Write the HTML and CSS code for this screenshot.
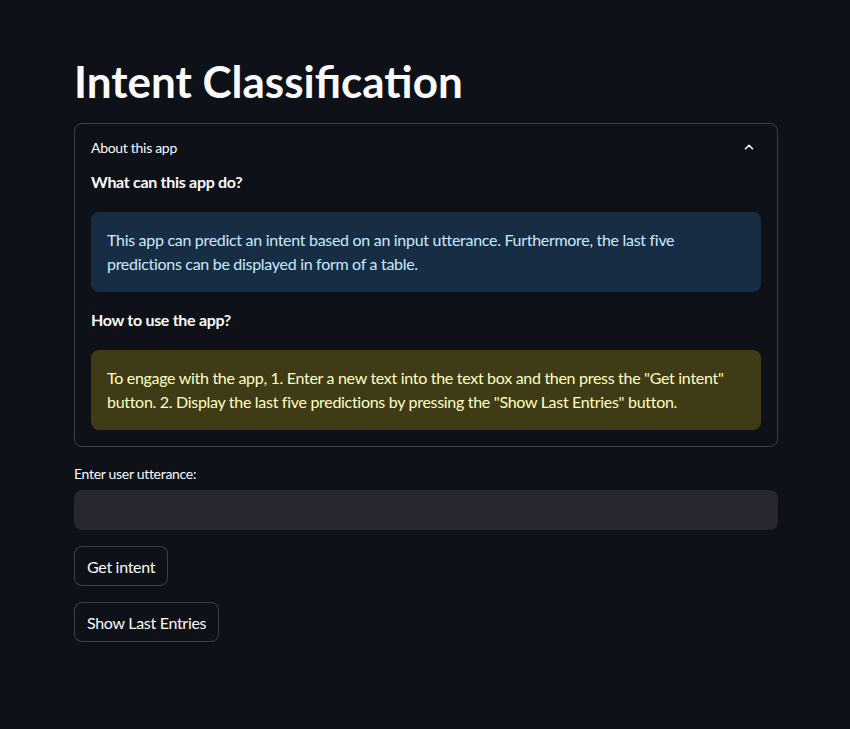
FILE: index.html
```html
<!DOCTYPE html>
<html>
<head>
<meta charset="utf-8">
<link rel="stylesheet" href="styles.css">
</head>
<body>
<main class="container">
  <h1 class="title">Intent Classification</h1>
  <section class="expander">
    <div class="exp-header">
      <span class="exp-label">About this app</span>
      <svg class="chevron" width="16" height="16" viewBox="0 0 16 16"><path d="M4.5 9.8 L8 6.3 L11.5 9.8" fill="none" stroke="#fafafa" stroke-width="1.6" stroke-linecap="round" stroke-linejoin="round"/></svg>
    </div>
    <div class="exp-body">
      <p class="subhead">What can this app do?</p>
      <div class="alert info">This app can predict an intent based on an input utterance. Furthermore, the last five predictions can be displayed in form of a table.</div>
      <p class="subhead second">How to use the app?</p>
      <div class="alert warn">To engage with the app, 1. Enter a new text into the text box and then press the "Get intent" button. 2. Display the last five predictions by pressing the "Show Last Entries" button.</div>
    </div>
  </section>
  <label class="field-label">Enter user utterance:</label>
  <div class="input"></div>
  <button class="btn first">Get intent</button>
  <button class="btn">Show Last Entries</button>
</main>
</body>
</html>
```

FILE: styles.css
```css
html, body {
  margin: 0;
  padding: 0;
  background: #0e1117;
  color: #fafafa;
  font-family: Lato, "Noto Sans", sans-serif;
}
.container {
  width: 704px;
  margin: 0 auto 0 74px;
  padding-top: 55px;
  display: flex;
  flex-direction: column;
  align-items: flex-start;
  letter-spacing: -0.3px;
}
.title {
  margin: 0;
  font-size: 44px;
  line-height: 52px;
  font-weight: 700;
  letter-spacing: 0;
  align-self: stretch;
}
.expander {
  margin-top: 16px;
  align-self: stretch;
  border: 1px solid rgba(250, 250, 250, 0.2);
  border-radius: 8px;
}
.exp-header {
  height: 46px;
  display: flex;
  align-items: center;
  justify-content: space-between;
  padding: 0 20px 0 16px;
}
.exp-label {
  font-size: 14px;
  letter-spacing: -0.3px;
}
.chevron {
  display: block;
}
.exp-body {
  padding: 0 16px 16px;
}
.subhead {
  margin: 0;
  font-size: 16px;
  line-height: 24px;
  font-weight: 700;
}
.subhead.second {
  margin-top: 16px;
}
.alert {
  margin-top: 18px;
  padding: 16px;
  border-radius: 8px;
  font-size: 16px;
  line-height: 24px;
}
.info {
  background: #172d43;
  color: #c7ebff;
}
.warn {
  background: #3e3b16;
  color: #ffffc2;
}
.field-label {
  margin-top: 17px;
  font-size: 14px;
  line-height: 20px;
  letter-spacing: -0.3px;
}
.input {
  margin-top: 6px;
  align-self: stretch;
  height: 40px;
  background: #262730;
  border-radius: 8px;
}
.btn {
  margin-top: 16px;
  height: 40px;
  padding: 0 12px;
  background: #0e1117;
  color: #fafafa;
  border: 1px solid rgba(250, 250, 250, 0.2);
  border-radius: 8px;
  font-family: inherit;
  font-size: 16px;
  letter-spacing: -0.3px;
}
```
